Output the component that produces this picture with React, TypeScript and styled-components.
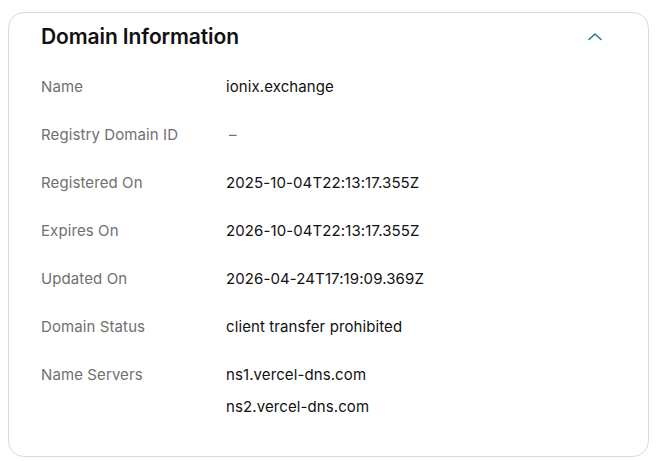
import React from 'react';
import styled, { createGlobalStyle } from 'styled-components';

const GlobalStyle = createGlobalStyle`
  html, body {
    margin: 0;
    padding: 0;
    background: #ffffff;
  }
  body {
    font-family: Inter, "Noto Sans", "Liberation Sans", sans-serif;
    -webkit-font-smoothing: antialiased;
  }
`;

const Page = styled.div`
  padding: 12px 10px 0 8px;
`;

const Card = styled.section`
  width: 641px;
  box-sizing: border-box;
  border: 1px solid #d6dce1;
  border-radius: 16px;
  padding: 0 32px 25px;
`;

const Header = styled.div`
  display: flex;
  align-items: center;
  justify-content: space-between;
  height: 47px;
  margin-bottom: 3px;
`;

const Title = styled.h2`
  margin: 0;
  font-size: 21px;
  font-weight: 600;
  line-height: 28px;
  color: #111111;
  letter-spacing: -0.1px;
`;

const Toggle = styled.button`
  display: flex;
  align-items: center;
  justify-content: center;
  width: 24px;
  height: 24px;
  margin-right: 9px;
  padding: 0;
  border: none;
  background: none;
  color: #1b7d83;
  cursor: pointer;
`;

const Rows = styled.dl`
  margin: 0;
`;

const Row = styled.div`
  display: grid;
  grid-template-columns: 185px 1fr;
  padding: 12px 0;
`;

const Label = styled.dt`
  font-size: 15px;
  line-height: 24px;
  color: #707070;
  letter-spacing: 0.1px;
`;

const Values = styled.dd`
  margin: 0;
  display: flex;
  flex-direction: column;
  gap: 8px;
`;

const Value = styled.span<{ $muted?: boolean }>`
  font-size: 15px;
  line-height: 24px;
  letter-spacing: 0.1px;
  color: ${({ $muted }) => ($muted ? '#707070' : '#111111')};
  padding-left: ${({ $muted }) => ($muted ? '3px' : '0')};
`;

const info: { label: string; values: string[] }[] = [
  { label: 'Name', values: ['ionix.exchange'] },
  { label: 'Registry Domain ID', values: ['–'] },
  { label: 'Registered On', values: ['2025-10-04T22:13:17.355Z'] },
  { label: 'Expires On', values: ['2026-10-04T22:13:17.355Z'] },
  { label: 'Updated On', values: ['2026-04-24T17:19:09.369Z'] },
  { label: 'Domain Status', values: ['client transfer prohibited'] },
  { label: 'Name Servers', values: ['ns1.vercel-dns.com', 'ns2.vercel-dns.com'] },
];

const ChevronUp = () => (
  <svg width="16" height="16" viewBox="0 0 16 16" fill="none">
    <path d="M2 10.5 8 5l6 5.5" stroke="currentColor" strokeWidth="1.5" strokeLinecap="round" strokeLinejoin="round" />
  </svg>
);

export default function App() {
  return (
    <Page>
      <GlobalStyle />
      <Card>
        <Header>
          <Title>Domain Information</Title>
          <Toggle aria-label="Collapse">
            <ChevronUp />
          </Toggle>
        </Header>
        <Rows>
          {info.map((row) => (
            <Row key={row.label}>
              <Label>{row.label}</Label>
              <Values>
                {row.values.map((v) => (
                  <Value key={v} $muted={v === '–'}>{v}</Value>
                ))}
              </Values>
            </Row>
          ))}
        </Rows>
      </Card>
    </Page>
  );
}
